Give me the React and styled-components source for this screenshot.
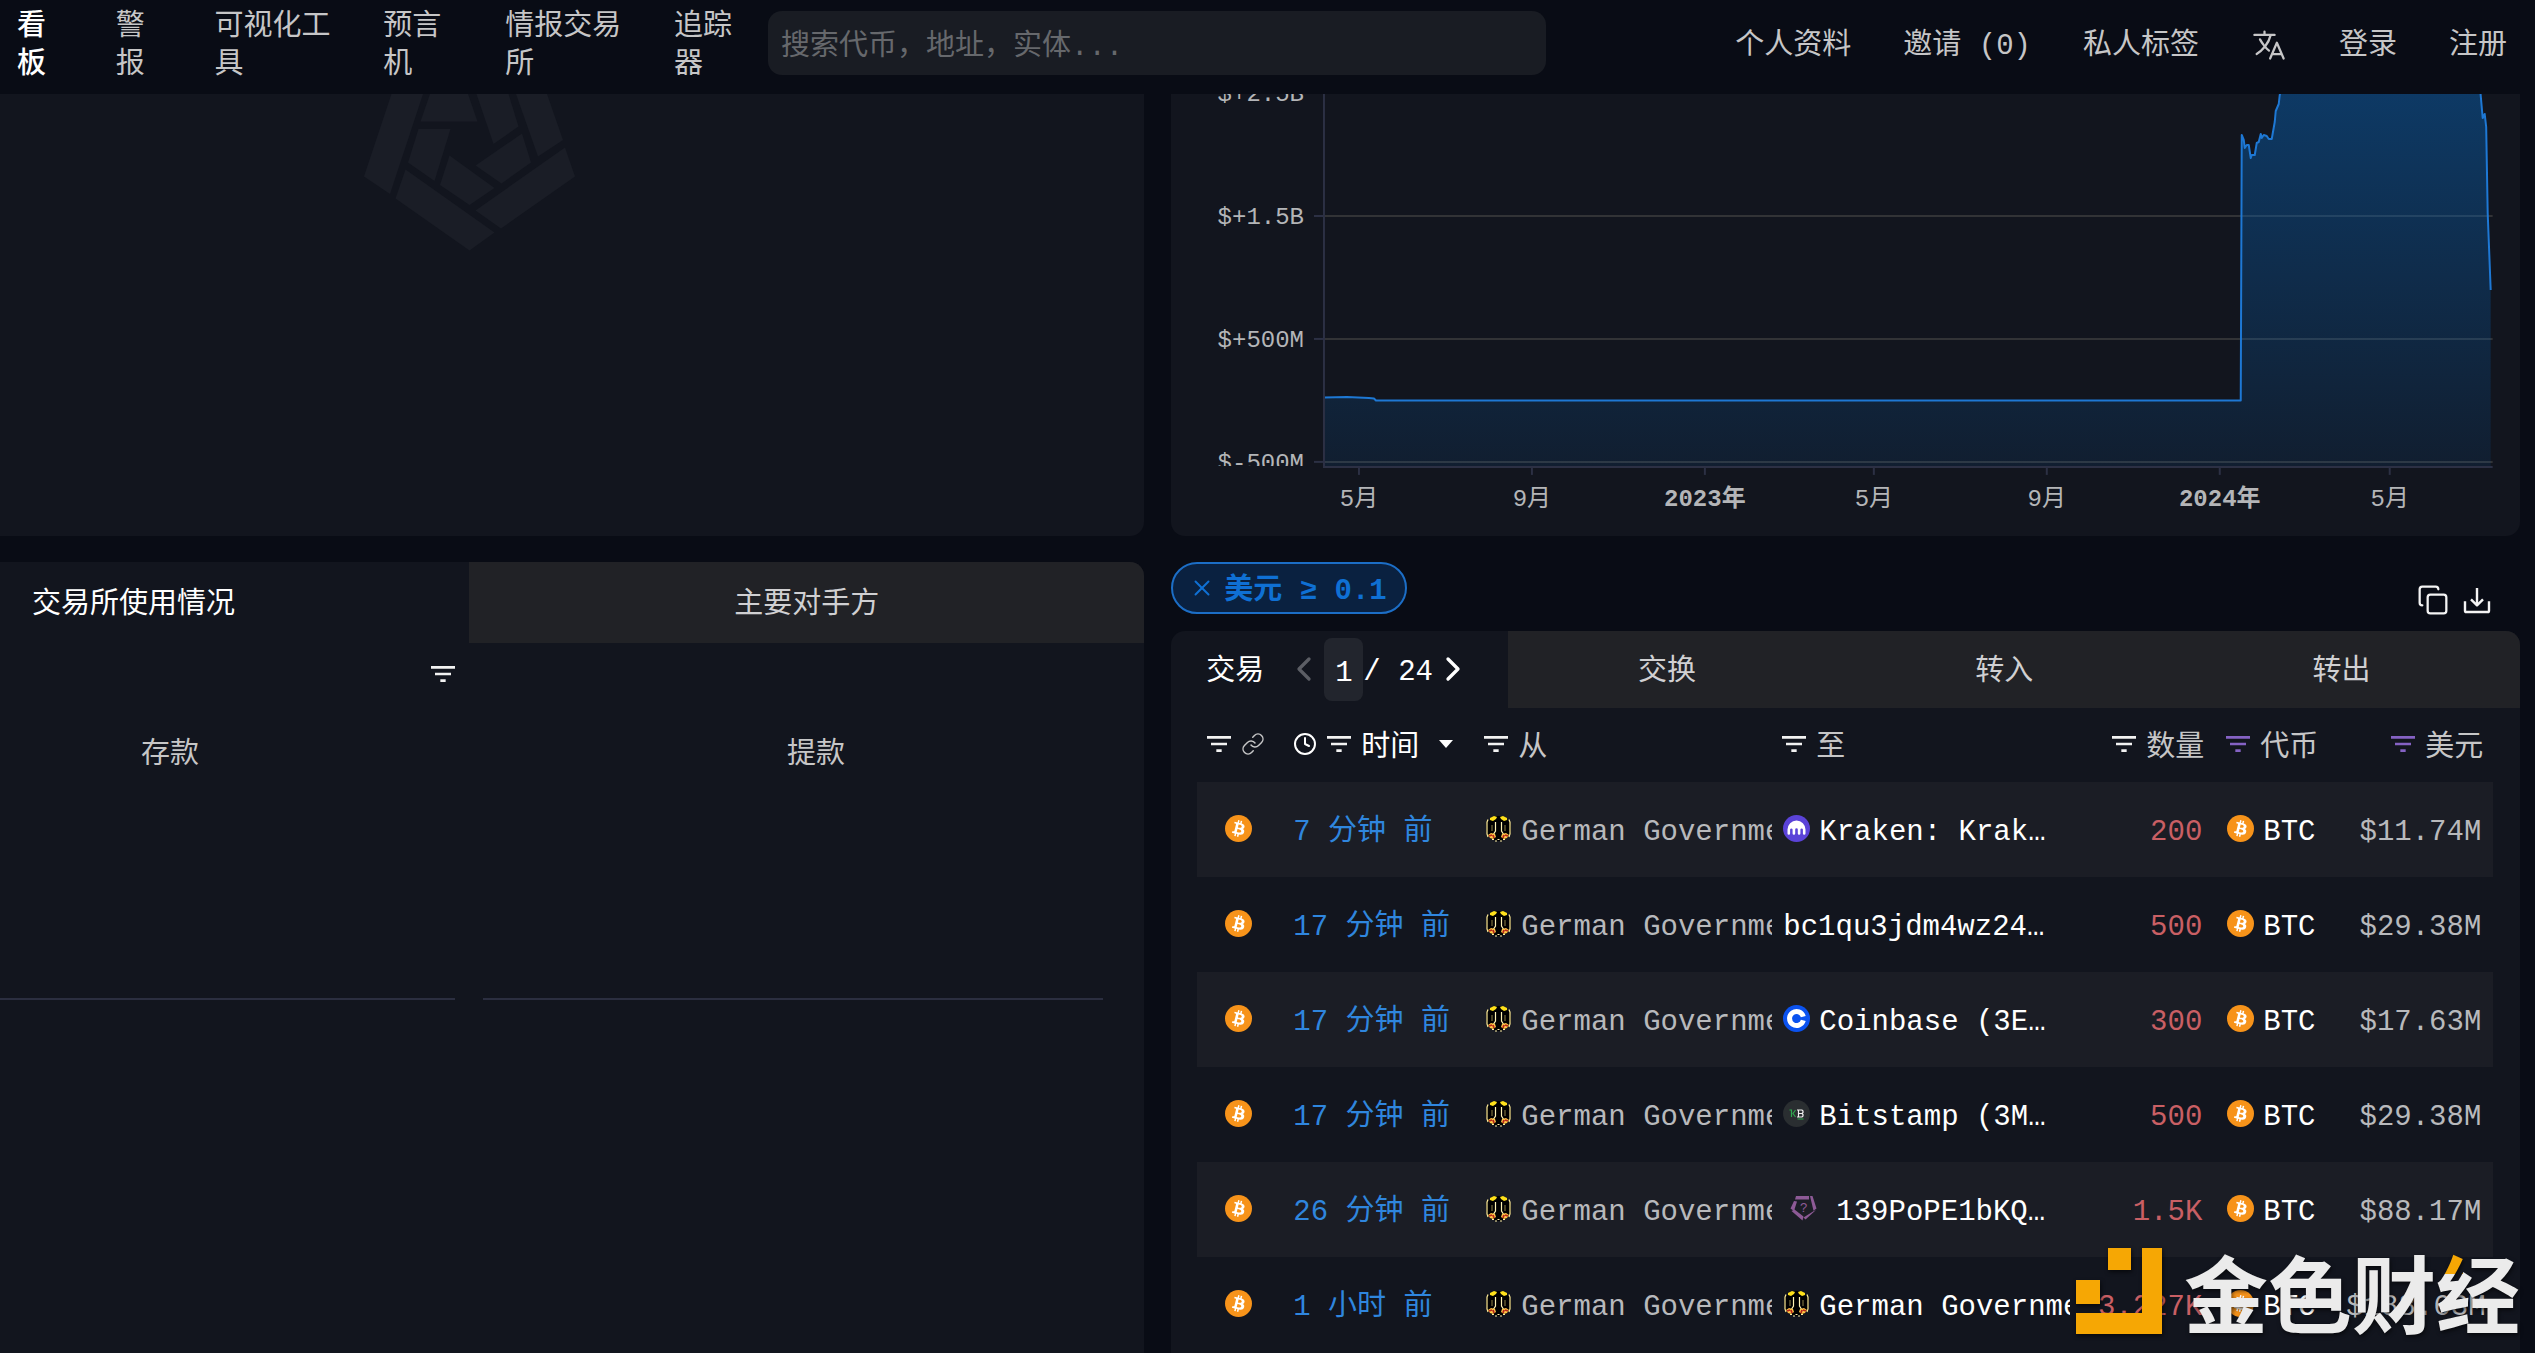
import React, { useState } from "react";
import styled, { createGlobalStyle } from "styled-components";
import { ChevronLeft, ChevronRight, Clock, Copy, Link as LinkIcon, X } from "lucide-react";
import { IoLanguageOutline } from "react-icons/io5";

const GlobalStyle = createGlobalStyle`
  * {
    box-sizing: border-box;
  }

  body {
    margin: 0;
    background: #090c15;
    color: #c6c6c7;
    font-family: "Liberation Mono", "Noto Sans CJK SC", monospace;
    font-size: 29px;
    line-height: 38px;
  }

  button,
  input {
    padding: 0;
    border: 0;
    background: none;
    color: inherit;
    font: inherit;
  }

  button {
    cursor: pointer;
  }

  a {
    color: inherit;
    text-decoration: none;
  }

  svg {
    display: block;
    flex: none;
  }
`;

const Page = styled.div`
  position: relative;
  display: flex;
  flex-direction: column;
  min-height: 100vh;
  overflow: hidden;
`;

/* ---------- header ---------- */

const Header = styled.header`
  display: flex;
  align-items: center;
  gap: 24px;
  min-height: 94px;
  padding: 0 28px 8px 17px;
`;

const Nav = styled.nav`
  flex: 0 1 727px;
  display: grid;
  grid-template-columns: 2fr 2fr 5fr 3fr 5fr 3fr;
  column-gap: 52px;
  padding-top: 8px;
`;

const NavLink = styled.a`
  color: ${({ $active }) => ($active ? "#fff" : "inherit")};
  font-weight: ${({ $active }) => ($active ? 500 : 400)};
`;

const Search = styled.input`
  flex: 0 1 778px;
  min-width: 0;
  height: 64px;
  padding: 8px 13px 0;
  border-radius: 14px;
  background: #191c23;

  &::placeholder {
    color: #66686c;
    opacity: 1;
  }
`;

const UserLinks = styled.div`
  display: flex;
  align-items: center;
  gap: 52px;
  margin-left: auto;
  padding-top: 8px;
  white-space: nowrap;

  svg {
    margin-bottom: 4px;
  }
`;

/* ---------- panels ---------- */

const Board = styled.main`
  flex: 1;
  display: grid;
  grid-template-columns: minmax(0, 28fr) minmax(0, 33fr);
  grid-template-rows: auto 1fr;
  gap: 26px 27px;
  padding-right: 15px;
`;

const TopPanel = styled.section`
  overflow: hidden;
  padding-left: ${({ $inset }) => $inset || 0}px;
  border-radius: 0 0 14px ${({ $inset }) => ($inset ? 0 : 14)}px;
  background: #12151e;
`;

const ChartSvg = styled.svg`
  width: 100%;
  height: auto;
`;

const UsagePanel = styled.section`
  overflow: hidden;
  border-radius: 0 14px 0 0;
  background: #12151e;
`;

const UsageTabs = styled.div`
  display: grid;
  grid-template-columns: 41% 1fr;
  height: 81px;
`;

const Tab = styled.button`
  padding: 8px 20px 0 0;
  background: #212226;
  color: #d0d0d2;
`;

const UsageTab = styled(Tab)`
  padding: ${({ $active }) => ($active ? "8px 0 0 32px" : "8px 0 0")};
  background: ${({ $active }) => ($active ? "transparent" : "#212226")};
  color: ${({ $active }) => ($active ? "#fff" : "#d0d0d2")};
  text-align: ${({ $active }) => ($active ? "left" : "center")};
`;

const UsageBody = styled.div`
  display: grid;
  grid-template-columns: 455fr 620fr;
  column-gap: 28px;
  padding: 15px 41px 0 0;
`;

const UsageColumn = styled.div`
  display: flex;
  flex-direction: column;
  height: 342px;
  border-bottom: 2px solid #2b2e40;
`;

const UsageTools = styled.div`
  display: flex;
  align-items: flex-start;
  justify-content: flex-end;
  height: 79px;
  margin-right: -4px;
`;

const UsageTitle = styled.h3`
  margin: 0;
  padding-left: ${({ $inset }) => $inset}%;
  font-size: 29px;
  font-weight: 400;
`;

/* ---------- transfers ---------- */

const Transfers = styled.section`
  display: flex;
  flex-direction: column;
`;

const FilterRow = styled.div`
  display: flex;
  align-items: flex-start;
  justify-content: space-between;
  height: 69px;
  padding-right: 27px;
`;

const FilterChip = styled.button`
  display: inline-flex;
  align-items: center;
  gap: 9px;
  height: 52px;
  padding: 0 18px 0 16px;
  border: 2px solid #1c6ec6;
  border-radius: 26px;
  background: #0a2140;
  color: #0f70d4;
  font-weight: 700;

  span {
    padding-top: 8px;
  }
`;

const Actions = styled.div`
  display: flex;
  gap: 12px;
  padding-top: 22px;
  color: #f4f4f4;
`;

const TransferCard = styled.div`
  flex: 1;
  overflow: hidden;
  border-radius: 14px 14px 0 0;
  background: #12151e;
`;

const TransferTabs = styled.div`
  display: grid;
  grid-template-columns: repeat(4, 1fr);
  height: 77px;
`;

const ActiveTab = styled.div`
  display: flex;
  align-items: center;
  padding-left: 35px;
  color: #fff;
`;

const TabLabel = styled.button`
  padding-top: 8px;
`;

const Pager = styled.div`
  display: flex;
  align-items: center;
  margin-left: 20px;

  button:disabled {
    color: #5c5e65;
  }
`;

const PageInput = styled.input`
  width: 39px;
  height: 63px;
  padding-top: 8px;
  border-radius: 8px;
  background: #22252d;
  text-align: center;
`;

const PageCount = styled.span`
  padding-top: 8px;
`;

const TableWrap = styled.div`
  padding: 0 27px 0 26px;
`;

const Table = styled.table`
  width: 100%;
  table-layout: fixed;
  border-collapse: collapse;
`;

const HeadCell = styled.th`
  width: ${({ $width }) => $width}px;
  height: 74px;
  padding: 8px 2px 0 6px;
  font-weight: 400;

  svg {
    margin-bottom: 10px;
  }

  &:nth-child(6) {
    padding-left: 16px;
  }

  &:last-child {
    padding-right: 10px;
  }
`;

const HeadContent = styled.div`
  display: flex;
  align-items: center;
  justify-content: ${({ $right }) => ($right ? "flex-end" : "flex-start")};
  gap: 6px;
  color: ${({ $active }) => ($active ? "#fff" : "inherit")};
  white-space: nowrap;
`;

const SortButton = styled.button`
  display: flex;
  align-items: center;
  gap: 20px;
`;

const Row = styled.tr`
  height: 95px;

  &:nth-child(odd) {
    background: #1b1d25;
  }
`;

const Cell = styled.td`
  padding: 8px 2px 0 6px;
  overflow: hidden;
  color: ${({ $color }) => $color || "#b8b9bc"};
  text-align: ${({ $right }) => ($right ? "right" : "left")};
  white-space: nowrap;

  svg {
    margin-bottom: 10px;
  }

  &:nth-child(5) {
    padding-right: 4px;
  }

  &:nth-child(6) {
    padding-left: 16px;
  }

  &:last-child {
    padding-right: 12px;
  }
`;

const Entity = styled.a`
  display: flex;
  align-items: center;
  gap: ${({ $wide }) => ($wide ? 19 : 9)}px;
  padding-left: ${({ $wide }) => ($wide ? 12 : 5)}px;
`;

const Chain = styled.div`
  display: flex;
  padding-left: 22px;
`;

/* ---------- watermark ---------- */

const Watermark = styled.div`
  position: absolute;
  right: 15px;
  bottom: 14px;
  display: flex;
  align-items: center;
  gap: 22px;
  color: #ebebeb;
  font-family: "Noto Sans CJK SC", sans-serif;
  font-size: 84px;
  font-weight: 700;
  line-height: 96px;
  filter: drop-shadow(1px 2px 2px rgba(0, 0, 0, 0.6));
  pointer-events: none;
`;

const AccentGlyph = styled.span`
  background: linear-gradient(#f6a704, #f6a704) 0 14px / 27px 30px no-repeat #ebebeb;
  background-clip: text;
  color: transparent;
`;

/* ---------- icons ---------- */

const FilterIcon = ({ color = "#f2f2f2" }) => (
  <svg width="32" height="32" viewBox="0 0 24 24" fill={color}>
    <path d="M3 6h18v2H3zM6 11h12v2H6zM10 16h4v2h-4z" />
  </svg>
);

const DownloadIcon = () => (
  <svg width="32" height="32" viewBox="0 0 24 24" fill="none" stroke="currentColor" strokeWidth="1.8" strokeLinejoin="round">
    <path d="M3 13v7a1 1 0 0 0 1 1h16a1 1 0 0 0 1-1v-7" />
    <path d="M12 3v13M7.500 11.500 12 16l4.500-4.500" />
  </svg>
);

const CaretIcon = () => (
  <svg width="14" height="8" viewBox="0 0 14 8" fill="currentColor">
    <path d="M0 0h14L7 8z" />
  </svg>
);

const BtcIcon = () => (
  <svg width="27" height="27" viewBox="0 0 32 32">
    <circle cx="16" cy="16" r="16" fill="#f7931a" />
    <path
      fill="#fff"
      d="M23.189 14.020c.314-2.096-1.283-3.223-3.465-3.975l.708-2.840-1.728-.43-.69 2.765c-.454-.114-.92-.22-1.385-.326l.695-2.783L15.596 6l-.708 2.839c-.376-.086-.746-.17-1.104-.26l.002-.009-2.384-.595-.46 1.846s1.283.294 1.256.312c.7.175.826.638.805 1.006l-.806 3.235c.048.012.11.030.18.057l-.183-.045-1.130 4.532c-.086.212-.303.531-.793.410.018.025-1.256-.313-1.256-.313l-.858 1.978 2.250.561c.418.105.828.215 1.231.318l-.715 2.872 1.727.430.708-2.840c.472.127.930.245 1.378.357l-.706 2.828 1.728.430.715-2.866c2.948.558 5.164.333 6.097-2.333.752-2.146-.037-3.385-1.588-4.192 1.130-.260 1.980-1.003 2.207-2.538zm-3.950 5.538c-.533 2.147-4.148.986-5.320.695l.950-3.805c1.172.293 4.929.872 4.370 3.110zm.535-5.569c-.487 1.953-3.495.960-4.470.717l.860-3.450c.975.243 4.118.696 3.610 2.733z"
    />
  </svg>
);

const EagleIcon = () => (
  <svg width="27" height="27" viewBox="0 0 27 27">
    <circle cx="13.500" cy="13.500" r="12.500" fill="#000" />
    <path d="M3 4.500 2 7v12l1 3M24 4.500 25 7v12l-1 3" fill="none" stroke="#ffeb96" strokeWidth="1.200" />
    <path d="M10.500 7v9l-2.500 4M16.500 7v9l2.500 4" fill="none" stroke="#fff3b4" strokeWidth="1.200" />
    <path d="M7 10v6M20 10v6" stroke="#8e8248" strokeWidth="1" />
    <path d="M5 3l4-2 3 1-1 2-3 2-3-1zM22 3l-4-2-3 1 1 2 3 2 3-1z" fill="#ffe11a" />
    <path d="M3 20l3-2 4 1 1 3-3 2-3-1zM24 20l-3-2-4 1-1 3 3 2 3-1z" fill="#ffc545" />
    <path d="M4 21l3-1M8 20l1 3M23 21l-3-1M19 20l-1 3" stroke="#b8281c" strokeWidth="1.800" />
    <path d="M7 24.500h2M10 26h2M12.500 24.500h2M15 26h2M18 24.500h2" stroke="#fff0a8" strokeWidth="1.200" />
  </svg>
);

const KrakenIcon = () => (
  <svg width="27" height="27" viewBox="0 0 27 27">
    <circle cx="13.500" cy="13.500" r="13.500" fill="#5b43d8" />
    <path
      fill="#fff"
      d="M4.500 14.500a9 9 0 0 1 18 0v4a1.300 1.300 0 0 1-2.600 0v-4a1.300 1.300 0 0 0-2.500 0v4a1.300 1.300 0 0 1-2.600 0v-4a1.300 1.300 0 0 0-2.600 0v4a1.300 1.300 0 0 1-2.600 0v-4a1.300 1.300 0 0 0-2.500 0v4a1.300 1.300 0 0 1-2.600 0z"
    />
  </svg>
);

const CoinbaseIcon = () => (
  <svg width="27" height="27" viewBox="0 0 27 27">
    <circle cx="13.500" cy="13.500" r="13.500" fill="#0b52ef" />
    <path d="M20.300 11.600a7 7 0 1 0 0 3.800" fill="none" stroke="#fff" strokeWidth="5" />
  </svg>
);

const BitstampIcon = () => (
  <svg width="27" height="27" viewBox="0 0 27 27">
    <circle cx="13.500" cy="13.500" r="13.500" fill="#2a2e31" />
    <path d="M6.500 10h2v7M12.500 10l-2.500 3.500 2.500 3.500" fill="none" stroke="#2fa84f" strokeWidth="1.200" />
    <path d="M14 10h5l1 1v1.500l-1 1 1 1V16l-1 1h-5M15.500 10v7M15.500 13.500H19" fill="none" stroke="#f0f0f0" strokeWidth="1.200" />
    <path d="M14.500 19h6" stroke="#2fa84f" strokeWidth="1" />
  </svg>
);

const UnknownIcon = () => (
  <svg width="27" height="27" viewBox="0 0 27 27">
    <g fill="#8d5a96">
      <path d="M6 1h13v3.500H5zM20 1h2.500l4 12.500-3 2.200zM4 6l3 .5-3 9.500-3.500-2.500zM1.500 16l3-1.500 9 7-1 4zM23 16.500l3-1.500-10.500 9.500-2-2z" />
    </g>
    <text x="13.500" y="17" fill="#8d5a96" fontSize="13" fontFamily="Liberation Sans, sans-serif" textAnchor="middle">
      ?
    </text>
  </svg>
);

const ArkhamMark = () => (
  <svg width="212" height="157" viewBox="0 0 212 157" fill="#1a1d26">
    <path d="M27.500 0H59L26 100 0 82.500z" />
    <path d="M66 0h38l9.500 27.500h-57z" />
    <path d="M112.500 0h32l10 32.500-25 17.500z" />
    <path d="M152 0h31l16 46-25 16.500z" />
    <path d="M201 53.500l10 29-74 52-25.500-18z" />
    <path d="M158 39.500l9 29-29.500 21-26-18z" />
    <path d="M54.500 35h32l-16 52L44 68.500z" />
    <path d="M85.500 61.500l45 32.500-25 17L76 91z" />
    <path d="M41.500 75.500l89 63-25 18-74-52z" />
  </svg>
);

const WatermarkLogo = () => (
  <svg width="86" height="86" viewBox="0 0 86 86" fill="#f6a704">
    <path d="M32 0h23v22H32zM0 32h24v24H0zM66 0h20v86H0V65h66z" />
  </svg>
);

/* ---------- chart ---------- */

const BALANCE_LINE =
  "M153 303.500L176 303L198 304L203 304.500L205 306.500L1070 306.500L1071 41L1073 46L1074 54L1076 51L1078 51L1080 64L1081 61L1084 61L1086 49L1088 48L1090 40L1091 44L1093 41L1096 42L1098 45L1101 45L1104 28L1105 17L1108 10L1109 1L1112 -10L1309 -10L1312 24L1314 20L1315.500 33L1317 119L1320 196";

const Y_TICKS = [
  { label: "$+2.5B", y: -1 },
  { label: "$+1.5B", y: 122 },
  { label: "$+500M", y: 245 },
  { label: "$-500M", y: 368 },
];

const X_TICKS = [
  { label: "5月", x: 188 },
  { label: "9月", x: 361 },
  { label: "2023年", x: 534, bold: true },
  { label: "5月", x: 703 },
  { label: "9月", x: 876 },
  { label: "2024年", x: 1049, bold: true },
  { label: "5月", x: 1219 },
];

const BalanceChart = () => (
  <ChartSvg viewBox="0 0 1349 442" fontSize="24" fill="#b4b5b8">
    <defs>
      <linearGradient id="balance" gradientUnits="userSpaceOnUse" x1="0" y1="0" x2="0" y2="372">
        <stop offset="0" stopColor="#0862b4" stopOpacity="0.47" />
        <stop offset="1" stopColor="#0862b4" stopOpacity="0.12" />
      </linearGradient>
      <clipPath id="plot">
        <rect x="0" y="0" width="1349" height="372" />
      </clipPath>
    </defs>
    <g clipPath="url(#plot)">
      {Y_TICKS.map(({ label, y }) => (
        <g key={label}>
          <path d={`M153 ${y}H1322`} stroke="#323336" strokeWidth="2" />
          <path d={`M143 ${y}H153`} stroke="#2c3044" strokeWidth="2" />
          <text x="133" y={y + 8} textAnchor="end">
            {label}
          </text>
        </g>
      ))}
      <path d={`${BALANCE_LINE}V372H153z`} fill="url(#balance)" />
      <path d={BALANCE_LINE} fill="none" stroke="#1e78d4" strokeWidth="2" strokeLinejoin="round" />
    </g>
    <path d="M153 0V373H1322" fill="none" stroke="#2c3044" strokeWidth="2" />
    {X_TICKS.map(({ label, x, bold }) => (
      <g key={x}>
        <path d={`M${x} 374V381`} stroke="#2c3044" strokeWidth="2" />
        <text x={x} y="412" textAnchor="middle" fontWeight={bold ? 700 : 400}>
          {label}
        </text>
      </g>
    ))}
  </ChartSvg>
);

/* ---------- data ---------- */

const NAV_ITEMS = ["看板", "警报", "可视化工具", "预言机", "情报交易所", "追踪器"];

const TRANSFERS = [
  { time: "7 分钟 前", icon: KrakenIcon, to: "Kraken: Krak…", amount: "200", usd: "$11.74M" },
  { time: "17 分钟 前", to: "bc1qu3jdm4wz24…", amount: "500", usd: "$29.38M" },
  { time: "17 分钟 前", icon: CoinbaseIcon, to: "Coinbase (3E…", amount: "300", usd: "$17.63M" },
  { time: "17 分钟 前", icon: BitstampIcon, to: "Bitstamp (3M…", amount: "500", usd: "$29.38M" },
  { time: "26 分钟 前", icon: UnknownIcon, to: "139PoPE1bKQ…", amount: "1.5K", usd: "$88.17M", wide: true },
  { time: "1 小时 前", icon: EagleIcon, to: "German Government", amount: "3.227K", usd: "$188.63M" },
];

const PURPLE = "#8562c4";

const FilterButton = ({ label, color }) => (
  <button type="button" aria-label={label}>
    <FilterIcon color={color} />
  </button>
);

const TransferRow = ({ transfer }) => {
  const ToIcon = transfer.icon;

  return (
    <Row>
      <Cell>
        <Chain>
          <BtcIcon />
        </Chain>
      </Cell>
      <Cell $color="#2f86de">
        <a href="#tx">{transfer.time}</a>
      </Cell>
      <Cell>
        <Entity href="#from">
          <EagleIcon />
          German Government
        </Entity>
      </Cell>
      <Cell $color="#fff">
        <Entity href="#to" $wide={transfer.wide}>
          {ToIcon && <ToIcon />}
          {transfer.to}
        </Entity>
      </Cell>
      <Cell $color="#c95f64" $right>
        {transfer.amount}
      </Cell>
      <Cell $color="#fff">
        <Entity href="#btc">
          <BtcIcon />
          BTC
        </Entity>
      </Cell>
      <Cell $right>{transfer.usd}</Cell>
    </Row>
  );
};

const App = () => {
  const [page, setPage] = useState("1");

  return (
    <Page>
      <GlobalStyle />
      <Header>
        <Nav>
          {NAV_ITEMS.map((item, index) => (
            <NavLink key={item} href="#nav" $active={index === 0}>
              {item}
            </NavLink>
          ))}
        </Nav>
        <Search type="text" aria-label="搜索" placeholder="搜索代币，地址，实体..." />
        <UserLinks>
          <a href="#profile">个人资料</a>
          <a href="#invite">邀请 (0)</a>
          <a href="#labels">私人标签</a>
          <button type="button" aria-label="语言">
            <IoLanguageOutline size={36} />
          </button>
          <a href="#login">登录</a>
          <a href="#signup">注册</a>
        </UserLinks>
      </Header>

      <Board>
        <TopPanel $inset={364}>
          <ArkhamMark />
        </TopPanel>

        <TopPanel>
          <BalanceChart />
        </TopPanel>

        <UsagePanel>
          <UsageTabs>
            <UsageTab type="button" $active>
              交易所使用情况
            </UsageTab>
            <UsageTab type="button">主要对手方</UsageTab>
          </UsageTabs>
          <UsageBody>
            <UsageColumn>
              <UsageTools>
                <FilterButton label="筛选" />
              </UsageTools>
              <UsageTitle $inset={31}>存款</UsageTitle>
            </UsageColumn>
            <UsageColumn>
              <UsageTools />
              <UsageTitle $inset={49}>提款</UsageTitle>
            </UsageColumn>
          </UsageBody>
        </UsagePanel>

        <Transfers>
          <FilterRow>
            <FilterChip type="button">
              <X size={26} strokeWidth={1.8} />
              <span>美元 ≥ 0.1</span>
            </FilterChip>
            <Actions>
              <button type="button" aria-label="复制">
                <Copy size={32} strokeWidth={1.7} />
              </button>
              <button type="button" aria-label="下载">
                <DownloadIcon />
              </button>
            </Actions>
          </FilterRow>

          <TransferCard>
            <TransferTabs>
              <ActiveTab>
                <TabLabel type="button">交易</TabLabel>
                <Pager>
                  <button type="button" aria-label="上一页" disabled>
                    <ChevronLeft size={40} />
                  </button>
                  <PageInput aria-label="页码" value={page} onChange={(e) => setPage(e.target.value)} />
                  <PageCount>/ 24</PageCount>
                  <button type="button" aria-label="下一页">
                    <ChevronRight size={40} />
                  </button>
                </Pager>
              </ActiveTab>
              <Tab type="button">交换</Tab>
              <Tab type="button">转入</Tab>
              <Tab type="button">转出</Tab>
            </TransferTabs>

            <TableWrap>
              <Table>
                <thead>
                  <tr>
                    <HeadCell $width={90}>
                      <HeadContent>
                        <FilterButton label="筛选链" />
                        <LinkIcon size={24} strokeWidth={1.5} />
                      </HeadContent>
                    </HeadCell>
                    <HeadCell $width={187}>
                      <HeadContent $active>
                        <Clock size={24} strokeWidth={2} />
                        <FilterButton label="筛选时间" />
                        <SortButton type="button">
                          时间
                          <CaretIcon />
                        </SortButton>
                      </HeadContent>
                    </HeadCell>
                    <HeadCell $width={298}>
                      <HeadContent>
                        <FilterButton label="筛选从" />从
                      </HeadContent>
                    </HeadCell>
                    <HeadCell $width={298}>
                      <HeadContent>
                        <FilterButton label="筛选至" />至
                      </HeadContent>
                    </HeadCell>
                    <HeadCell $width={136}>
                      <HeadContent $right>
                        <FilterButton label="筛选数量" />
                        数量
                      </HeadContent>
                    </HeadCell>
                    <HeadCell $width={134}>
                      <HeadContent>
                        <FilterButton label="筛选代币" color={PURPLE} />
                        代币
                      </HeadContent>
                    </HeadCell>
                    <HeadCell $width={153}>
                      <HeadContent $right>
                        <FilterButton label="筛选美元" color={PURPLE} />
                        美元
                      </HeadContent>
                    </HeadCell>
                  </tr>
                </thead>
                <tbody>
                  {TRANSFERS.map((transfer) => (
                    <TransferRow key={transfer.usd + transfer.to} transfer={transfer} />
                  ))}
                </tbody>
              </Table>
            </TableWrap>
          </TransferCard>
        </Transfers>
      </Board>

      <Watermark>
        <WatermarkLogo />
        <span>
          金色财<AccentGlyph>经</AccentGlyph>
        </span>
      </Watermark>
    </Page>
  );
};

export default App;
